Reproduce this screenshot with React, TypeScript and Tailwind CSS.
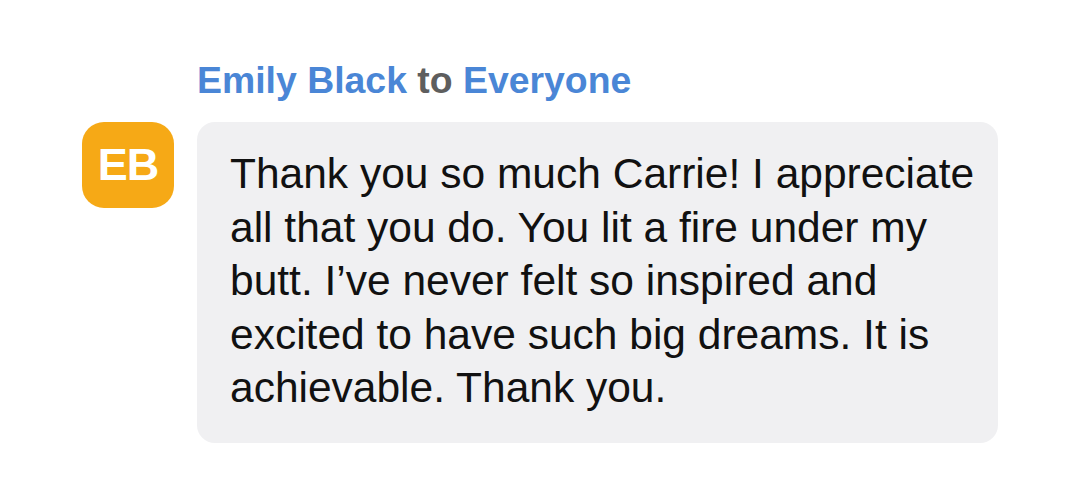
import React from 'react';

export default function App() {
  return (
    <div className="w-[1080px] h-[500px] bg-white font-['Liberation_Sans',Arial,sans-serif]">
      <div className="pt-[58px] pl-[82px]">
        <div className="pl-[115px] text-[37.4px] font-bold leading-[44px]">
          <span className="text-[#4a86d6]">Emily Black</span>
          <span className="text-[#5e5e5e]"> to </span>
          <span className="text-[#4a86d6]">Everyone</span>
        </div>
        <div className="mt-[20px] flex gap-[23px] items-start">
          <div className="w-[92px] h-[86px] rounded-[22px] bg-[#f6a916] flex items-center justify-center text-white font-bold text-[45px] tracking-[-1px]">
            EB
          </div>
          <div className="w-[801px] rounded-[18px] bg-[#f0f0f2] pl-[33px] pr-[10px] pt-[25px] pb-[28px] text-[42.5px] leading-[53.5px] text-[#111111]">
            Thank you so much Carrie! I appreciate
            <br />
            all that you do. You lit a fire under my
            <br />
            butt. I’ve never felt so inspired and
            <br />
            excited to have such big dreams. It is
            <br />
            achievable. Thank you.
          </div>
        </div>
      </div>
    </div>
  );
}
